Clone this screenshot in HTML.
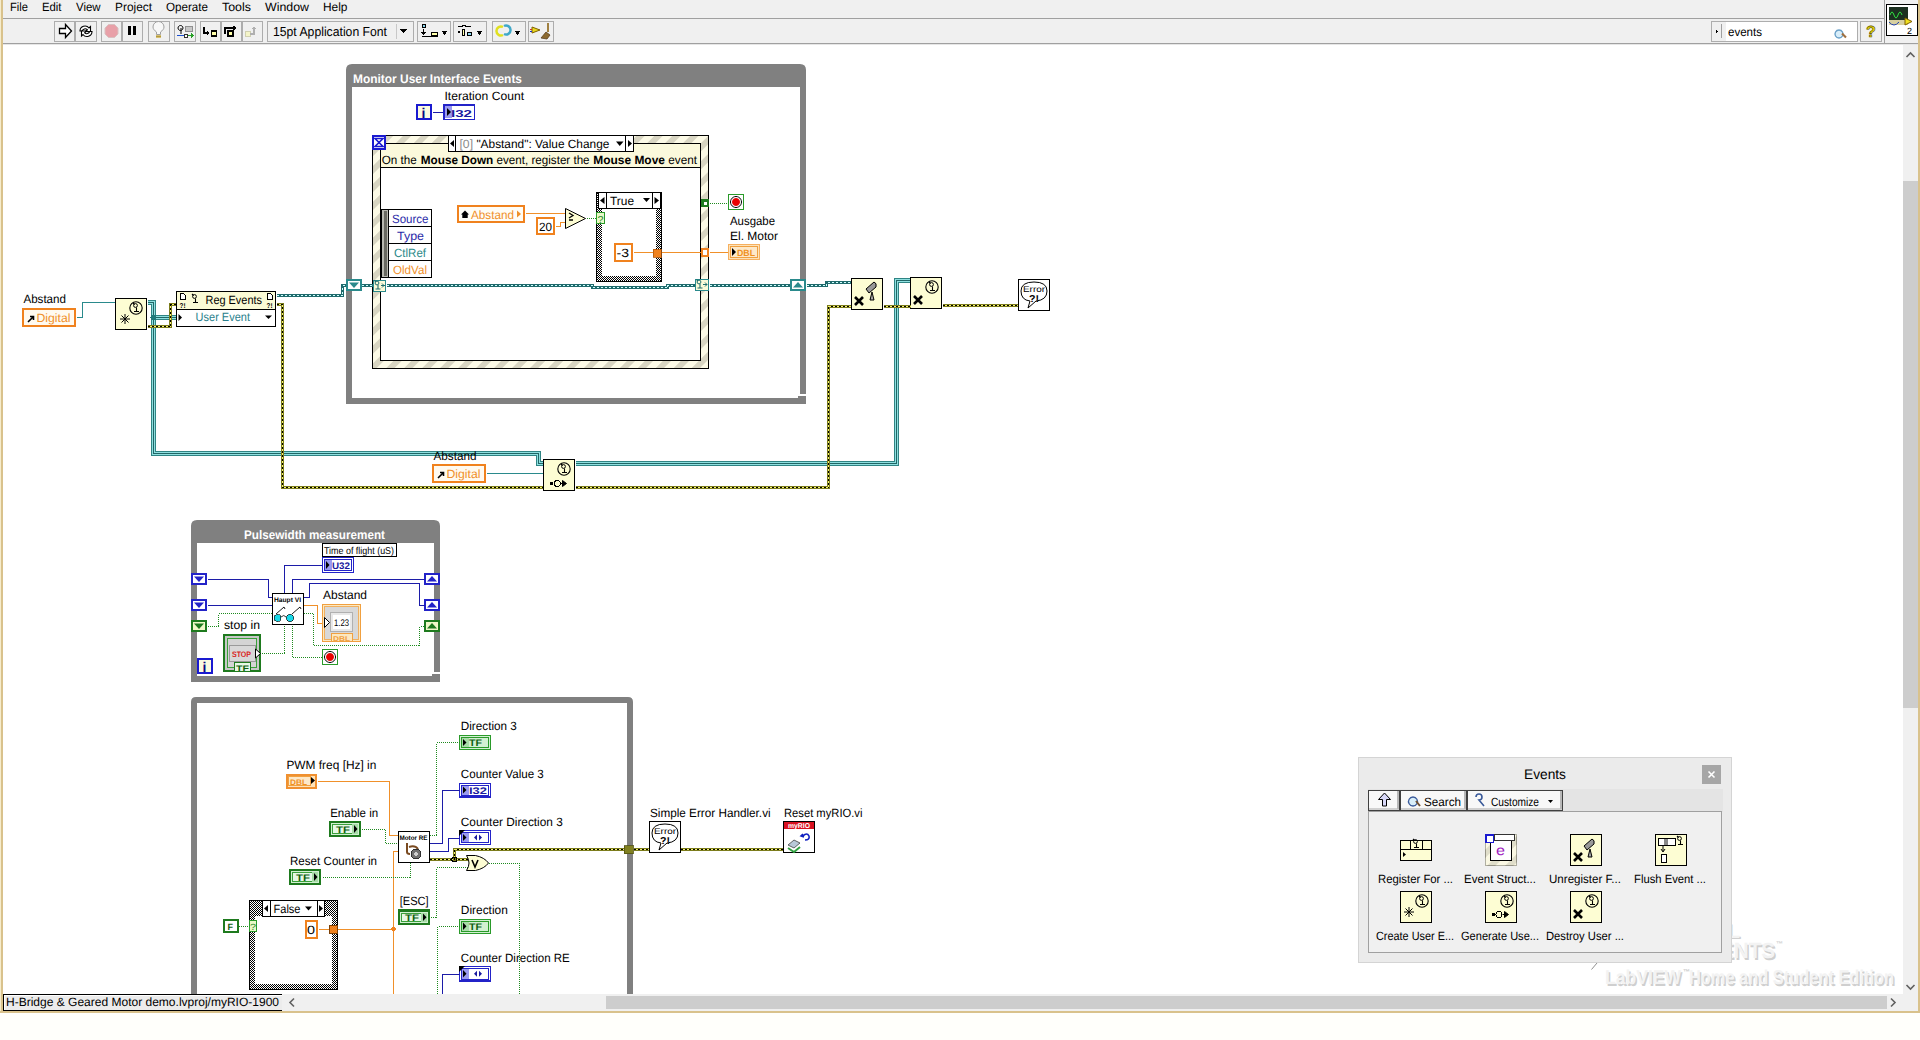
<!DOCTYPE html>
<html><head><meta charset="utf-8"><style>
html,body{margin:0;padding:0;background:#fff;overflow:hidden;width:1920px;height:1040px}
svg{position:absolute;left:0;top:0;display:block}
</style></head><body>
<svg width="1920" height="1040" viewBox="0 0 1920 1040" shape-rendering="crispEdges" text-rendering="geometricPrecision">
<rect x="0" y="0" width="1920" height="1040" fill="#ffffff" stroke="none" stroke-width="1" />
<rect x="0" y="0" width="1920" height="43" fill="#f0f0f0" stroke="none" stroke-width="1" />
<rect x="0" y="18" width="1884" height="1" fill="#a0a0a0" stroke="none" stroke-width="1" />
<rect x="0" y="43" width="1920" height="1" fill="#a0a0a0" stroke="none" stroke-width="1" />
<rect x="0" y="44" width="1920" height="1" fill="#e6e6e6" stroke="none" stroke-width="1" />
<rect x="0" y="0" width="1" height="1013" fill="#f6eccc" stroke="none" stroke-width="1" />
<rect x="1" y="0" width="2" height="1013" fill="#d9c28c" stroke="none" stroke-width="1" />
<rect x="1918" y="0" width="2" height="1013" fill="#d9c28c" stroke="none" stroke-width="1" />
<rect x="0" y="1011" width="1920" height="2" fill="#d9c28c" stroke="none" stroke-width="1" />
<rect x="0" y="1013" width="1920" height="27" fill="#fffffb" stroke="none" stroke-width="1" />
<text x="10" y="11" font-family='"Liberation Sans", sans-serif' font-size="12" fill="#000" font-weight="normal" text-anchor="start" textLength="18" lengthAdjust="spacingAndGlyphs" >File</text>
<text x="42" y="11" font-family='"Liberation Sans", sans-serif' font-size="12" fill="#000" font-weight="normal" text-anchor="start" textLength="19.5" lengthAdjust="spacingAndGlyphs" >Edit</text>
<text x="76" y="11" font-family='"Liberation Sans", sans-serif' font-size="12" fill="#000" font-weight="normal" text-anchor="start" textLength="24.599999999999994" lengthAdjust="spacingAndGlyphs" >View</text>
<text x="115" y="11" font-family='"Liberation Sans", sans-serif' font-size="12" fill="#000" font-weight="normal" text-anchor="start" textLength="37" lengthAdjust="spacingAndGlyphs" >Project</text>
<text x="166" y="11" font-family='"Liberation Sans", sans-serif' font-size="12" fill="#000" font-weight="normal" text-anchor="start" textLength="42" lengthAdjust="spacingAndGlyphs" >Operate</text>
<text x="222" y="11" font-family='"Liberation Sans", sans-serif' font-size="12" fill="#000" font-weight="normal" text-anchor="start" textLength="29" lengthAdjust="spacingAndGlyphs" >Tools</text>
<text x="265" y="11" font-family='"Liberation Sans", sans-serif' font-size="12" fill="#000" font-weight="normal" text-anchor="start" textLength="44" lengthAdjust="spacingAndGlyphs" >Window</text>
<text x="323" y="11" font-family='"Liberation Sans", sans-serif' font-size="12" fill="#000" font-weight="normal" text-anchor="start" textLength="24.5" lengthAdjust="spacingAndGlyphs" >Help</text>
<rect x="54.5" y="21.5" width="20" height="20" fill="#f0f0f0" stroke="#adadad" stroke-width="1" />
<rect x="75.5" y="21.5" width="21" height="20" fill="#f0f0f0" stroke="#adadad" stroke-width="1" />
<rect x="101.5" y="21.5" width="20" height="20" fill="#f0f0f0" stroke="#adadad" stroke-width="1" />
<rect x="122.5" y="21.5" width="20" height="20" fill="#f0f0f0" stroke="#adadad" stroke-width="1" />
<rect x="148.5" y="21.5" width="21" height="20" fill="#f0f0f0" stroke="#adadad" stroke-width="1" />
<rect x="174.5" y="21.5" width="21" height="20" fill="#f0f0f0" stroke="#adadad" stroke-width="1" />
<rect x="200.5" y="21.5" width="20" height="20" fill="#f0f0f0" stroke="#adadad" stroke-width="1" />
<rect x="221.5" y="21.5" width="20" height="20" fill="#f0f0f0" stroke="#adadad" stroke-width="1" />
<rect x="242.5" y="21.5" width="20" height="20" fill="#f0f0f0" stroke="#adadad" stroke-width="1" />
<rect x="417.5" y="21.5" width="33" height="20" fill="#f0f0f0" stroke="#adadad" stroke-width="1" />
<rect x="453.5" y="21.5" width="33" height="20" fill="#f0f0f0" stroke="#adadad" stroke-width="1" />
<rect x="492.5" y="21.5" width="33" height="20" fill="#f0f0f0" stroke="#adadad" stroke-width="1" />
<rect x="528.5" y="21.5" width="25" height="20" fill="#f0f0f0" stroke="#adadad" stroke-width="1" />
<path d="M59.5,28.5 h6 v-4 l6,6.5 l-6,6.5 v-4 h-6 z" fill="#fff" stroke="#000" stroke-width="1.3" shape-rendering="geometricPrecision"/>
<path d="M80,31 a5,5 0 0 1 9,-3 l1.5,-1.5 v5 h-5 l1.8,-1.8 a3,3 0 0 0 -5,1.3 z" fill="#fff" stroke="#000" stroke-width="1.1" shape-rendering="geometricPrecision"/>
<path d="M92,31.5 a5,5 0 0 1 -9,3 l-1.5,1.5 v-5 h5 l-1.8,1.8 a3,3 0 0 0 5,-1.3 z" fill="#fff" stroke="#000" stroke-width="1.1" shape-rendering="geometricPrecision"/>
<path d="M108.5,24.5 h6 l3.5,3.5 v6 l-3.5,3.5 h-6 l-3.5,-3.5 v-6 z" fill="#e8a0a8" stroke="#d8c0c0" stroke-width="1" shape-rendering="geometricPrecision"/>
<rect x="127.5" y="26" width="3" height="9" fill="#000" stroke="none" stroke-width="1" />
<rect x="133" y="26" width="3" height="9" fill="#000" stroke="none" stroke-width="1" />
<path d="M156.5,34.5 v-2.5 c-2,-1.5 -3.5,-3 -3.5,-5 a5.5,5.5 0 0 1 11,0 c0,2 -1.5,3.5 -3.5,5 v2.5 z" fill="#f8f8f8" stroke="#a0a0a0" stroke-width="1" shape-rendering="geometricPrecision"/>
<rect x="156" y="34.5" width="5" height="3.5" fill="#d8c070" stroke="none" stroke-width="1" />
<rect x="156" y="36" width="5" height="1" fill="#b09840" stroke="none" stroke-width="1" />
<path d="M180.5,25.5 a2.5,2.5 0 1 0 0.01,0 M181,28 v6" fill="none" stroke="#000" stroke-width="1" shape-rendering="geometricPrecision"/>
<rect x="185" y="26" width="7" height="5" fill="#c8c8c8" stroke="#909090" stroke-width="1" />
<rect x="177" y="35" width="8" height="1" fill="#1b4fd0" stroke="none" stroke-width="1" />
<rect x="184" y="34" width="3" height="3" fill="#fff" stroke="#000" stroke-width="0.8" />
<rect x="188" y="35" width="4" height="1" fill="#28a028" stroke="none" stroke-width="1" />
<path d="M191,33 l3,2.5 l-3,2.5 z" fill="#28a028" stroke="none" stroke-width="1" />
<path d="M203.5,27 v6 h5" fill="none" stroke="#000" stroke-width="2" />
<path d="M207,31 l3,2 l-3,2 z" fill="#000" stroke="none" stroke-width="1" />
<rect x="211.5" y="31" width="5" height="5" fill="#ffffa8" stroke="#000" stroke-width="1.2" />
<path d="M225,34 v-6 h9" fill="none" stroke="#000" stroke-width="2" />
<path d="M233,25.5 l4,2.5 l-4,2.5 z" fill="#000" stroke="none" stroke-width="1" />
<rect x="228" y="31" width="5" height="5" fill="#ffffa8" stroke="#000" stroke-width="1.2" />
<rect x="245" y="31" width="5" height="5" fill="#f4f4c8" stroke="#d0d0b0" stroke-width="1" />
<path d="M250,34 h4 v-6" fill="none" stroke="#b0b0b0" stroke-width="1.8" />
<path d="M251.5,29 l2.5,-3 l2.5,3 z" fill="#b0b0b0" stroke="none" stroke-width="1" />
<rect x="267.5" y="21.5" width="146" height="20" fill="#f0f0f0" stroke="#adadad" stroke-width="1" />
<rect x="396" y="24" width="1" height="15" fill="#c8c8c8" stroke="none" stroke-width="1" />
<path d="M400,29 h7 l-3.5,4 z" fill="#000" stroke="none" stroke-width="1" />
<text x="273" y="35.5" font-family='"Liberation Sans", sans-serif' font-size="13" fill="#000" font-weight="normal" text-anchor="start" textLength="114" lengthAdjust="spacingAndGlyphs" >15pt Application Font</text>
<path d="M441.5,31 h6 l-3,4 z" fill="#000" stroke="none" stroke-width="1" />
<path d="M476.5,31 h6 l-3,4 z" fill="#000" stroke="none" stroke-width="1" />
<path d="M514.5,31 h6 l-3,4 z" fill="#000" stroke="none" stroke-width="1" />
<rect x="422.5" y="24.5" width="3" height="3" fill="#8fd8f0" stroke="#000" stroke-width="1" />
<rect x="423" y="29" width="1" height="5" fill="#000" stroke="none" stroke-width="1" />
<path d="M421,32 l2.5,3 l2.5,-3 z" fill="#000" stroke="none" stroke-width="1" />
<rect x="431" y="32.5" width="6" height="3" fill="#ffffa8" stroke="#000" stroke-width="1" />
<rect x="422" y="36" width="16" height="1" fill="#000" stroke="none" stroke-width="0" stroke-dasharray="1,1"/>
<path d="M457.5,26 h5 l1.5,-1 l1.5,1 h5" fill="none" stroke="#000" stroke-width="1" />
<rect x="458" y="31" width="2" height="2" fill="#000" stroke="none" stroke-width="1" />
<rect x="462.5" y="29.5" width="2" height="6" fill="#ffffa8" stroke="#000" stroke-width="1" />
<rect x="467" y="32" width="4" height="3" fill="#8fd8f0" stroke="#000" stroke-width="1" />
<path d="M503,27 a4.5,4.5 0 1 0 0,8" fill="none" stroke="#e0e020" stroke-width="2.5" shape-rendering="geometricPrecision"/>
<path d="M504,26 a4.5,4.5 0 1 1 0,8" fill="none" stroke="#40a8c8" stroke-width="2.5" shape-rendering="geometricPrecision"/>
<path d="M532,27 l8,3 l-8,3 z" fill="#e8d820" stroke="#806000" stroke-width="1" shape-rendering="geometricPrecision"/>
<rect x="530" y="29" width="2" height="1" fill="#d03030" stroke="none" stroke-width="1" />
<rect x="530" y="31" width="2" height="1" fill="#2030c0" stroke="none" stroke-width="1" />
<path d="M541,38 l5,-6 l4,3 l-3,4 z" fill="#8c6a30" stroke="#5a4020" stroke-width="0.8" shape-rendering="geometricPrecision"/>
<rect x="547" y="23" width="2" height="9" fill="#a08040" stroke="none" stroke-width="1" />
<rect x="1711.5" y="21.5" width="146" height="20" fill="#ffffff" stroke="#adadad" stroke-width="1" />
<rect x="1712" y="22" width="14" height="19" fill="#f0f0f0" stroke="none" stroke-width="1" />
<path d="M1716,30 l2,1.5 l-2,1.5 z" fill="#000" stroke="none" stroke-width="1" />
<rect x="1721" y="24" width="1" height="14" fill="#a0a0a0" stroke="none" stroke-width="1" />
<text x="1728" y="36" font-family='"Liberation Sans", sans-serif' font-size="12" fill="#000" font-weight="normal" text-anchor="start" textLength="34" lengthAdjust="spacingAndGlyphs" >events</text>
<path d="M1839,30 a4,4 0 1 0 0.01,0" fill="#d8eefa" stroke="#6aa0c8" stroke-width="1.4" shape-rendering="geometricPrecision"/>
<path d="M1842,33.5 l4,4" fill="none" stroke="#a07040" stroke-width="2.2" shape-rendering="geometricPrecision"/>
<rect x="1860.5" y="21.5" width="21" height="20" fill="#f0f0f0" stroke="#adadad" stroke-width="1" />
<text x="1866" y="37" font-family='"Liberation Sans", sans-serif' font-size="16" fill="#e8d800" font-weight="bold" text-anchor="start" stroke="#5a5000" stroke-width="0.6">?</text>
<rect x="1884" y="0" width="1" height="43" fill="#a0a0a0" stroke="none" stroke-width="1" />
<rect x="1886.5" y="4.5" width="31" height="31" fill="#ffffff" stroke="#000" stroke-width="1" />
<rect x="1889" y="7" width="19" height="13" fill="#1c3020" stroke="none" stroke-width="1" />
<path d="M1890,15 q2,-6 4,0 q2,6 4,0 q2,-6 4,0" fill="none" stroke="#30e040" stroke-width="1" shape-rendering="geometricPrecision"/>
<rect x="1889" y="20" width="19" height="5" fill="#d8d0a0" stroke="none" stroke-width="1" />
<path d="M1889,22 q5,6 10,0" fill="none" stroke="#2040b0" stroke-width="1" shape-rendering="geometricPrecision"/>
<path d="M1905,18 l7,3.5 l-7,3.5 z" fill="#f0e020" stroke="#806000" stroke-width="1" shape-rendering="geometricPrecision"/>
<text x="1907" y="34" font-family='"Liberation Sans", sans-serif' font-size="9" fill="#000" font-weight="normal" text-anchor="start" >2</text>
<defs>
<pattern id="stripe" patternUnits="userSpaceOnUse" width="12.7" height="12.7" patternTransform="rotate(45)">
<rect width="12.7" height="12.7" fill="#fcfae6"/><rect width="5.8" height="12.7" fill="#d8d5c2"/></pattern>
<pattern id="checker" patternUnits="userSpaceOnUse" width="2" height="2">
<rect width="2" height="2" fill="#fff"/><rect width="1" height="1" fill="#000"/><rect x="1" y="1" width="1" height="1" fill="#000"/></pattern>
</defs>
<path d="M346,404 V70 Q346,64 352,64 H800 Q806,64 806,70 V394 H800 V87 H352 V398 H806 V404 Z" fill="#808080" stroke="none" stroke-width="0" shape-rendering="geometricPrecision"/>
<text x="353" y="82.5" font-family='"Liberation Sans", sans-serif' font-size="12.5" fill="#ffffff" font-weight="bold" text-anchor="start" textLength="169" lengthAdjust="spacingAndGlyphs" >Monitor User Interface Events</text>
<rect x="798" y="396" width="8" height="2" fill="#808080" stroke="none" stroke-width="1" />
<rect x="417.0" y="105.0" width="14" height="14" fill="#fbfbe0" stroke="#1a1ad0" stroke-width="2" />
<text x="421.5" y="117.5" font-family='"Liberation Sans", sans-serif' font-size="14" fill="#0a0a80" font-weight="bold" text-anchor="start" >i</text>
<polyline points="432.5,112.5 443.5,112.5" fill="none" stroke="#1c1ca8" stroke-width="1" stroke-linejoin="miter" stroke-linecap="butt" />
<rect x="443.75" y="104.75" width="30.5" height="14.5" fill="#ffffff" stroke="#2323c8" stroke-width="1.5" />
<rect x="445" y="106" width="7" height="12" fill="#9a9af0" stroke="none" stroke-width="1" />
<path d="M447,108 l4,4 l-4,4 z" fill="#000" stroke="none" stroke-width="0" shape-rendering="geometricPrecision"/>
<text x="451" y="116.5" font-family='"Liberation Sans", sans-serif' font-size="10" fill="#1a1aa0" font-weight="bold" text-anchor="start" textLength="21" lengthAdjust="spacingAndGlyphs" >I32</text>
<text x="444.5" y="100" font-family='"Liberation Sans", sans-serif' font-size="12" fill="#000" font-weight="normal" text-anchor="start" textLength="79.5" lengthAdjust="spacingAndGlyphs" >Iteration Count</text>
<rect x="372" y="135" width="337" height="234" fill="url(#stripe)"/>
<rect x="372.5" y="135.5" width="336" height="233" fill="none" stroke="#000" stroke-width="1" />
<rect x="380.5" y="143.5" width="320" height="217" fill="#ffffff" stroke="#000" stroke-width="1" />
<rect x="381" y="144" width="319" height="23" fill="#fbf9dc" stroke="none" stroke-width="1" />
<rect x="381" y="167" width="320" height="1" fill="#000" stroke="none" stroke-width="1" />
<text x="381.8" y="164" font-family='"Liberation Sans", sans-serif' font-size="12" fill="#000" font-weight="normal" text-anchor="start" textLength="35" lengthAdjust="spacingAndGlyphs" >On the</text>
<text x="420.8" y="164" font-family='"Liberation Sans", sans-serif' font-size="12" fill="#000" font-weight="bold" text-anchor="start" textLength="72.4" lengthAdjust="spacingAndGlyphs" >Mouse Down</text>
<text x="496.6" y="164" font-family='"Liberation Sans", sans-serif' font-size="12" fill="#000" font-weight="normal" text-anchor="start" textLength="93" lengthAdjust="spacingAndGlyphs" >event, register the</text>
<text x="593.2" y="164" font-family='"Liberation Sans", sans-serif' font-size="12" fill="#000" font-weight="bold" text-anchor="start" textLength="71.8" lengthAdjust="spacingAndGlyphs" >Mouse Move</text>
<text x="668.3" y="164" font-family='"Liberation Sans", sans-serif' font-size="12" fill="#000" font-weight="normal" text-anchor="start" textLength="28.7" lengthAdjust="spacingAndGlyphs" >event</text>
<rect x="373.0" y="136.0" width="12" height="13" fill="#ffffff" stroke="#1a1ad0" stroke-width="2" />
<path d="M375,138.5 h8 l-4,4 l4,4 h-8 l4,-4 z" fill="#ffffff" stroke="#1a1ad0" stroke-width="1.6" shape-rendering="geometricPrecision"/>
<rect x="448.5" y="135.5" width="185" height="16" fill="#ffffff" stroke="#000" stroke-width="1" />
<rect x="455" y="135" width="1" height="17" fill="#000" stroke="none" stroke-width="1" />
<rect x="625" y="135" width="1" height="17" fill="#000" stroke="none" stroke-width="1" />
<path d="M450,143.5 l4,-3.5 v7 z" fill="#000" stroke="none" stroke-width="0" shape-rendering="geometricPrecision"/>
<path d="M632,143.5 l-4,-3.5 v7 z" fill="#000" stroke="none" stroke-width="0" shape-rendering="geometricPrecision"/>
<text x="459.5" y="147.5" font-family='"Liberation Sans", sans-serif' font-size="12" fill="#8a8a8a" font-weight="normal" text-anchor="start" textLength="13.5" lengthAdjust="spacingAndGlyphs" >[0]</text>
<text x="476.4" y="147.5" font-family='"Liberation Sans", sans-serif' font-size="12" fill="#000" font-weight="normal" text-anchor="start" textLength="133" lengthAdjust="spacingAndGlyphs" >&quot;Abstand&quot;: Value Change</text>
<path d="M616,141.5 h7.5 l-3.75,4.5 z" fill="#000" stroke="none" stroke-width="0" shape-rendering="geometricPrecision"/>
<rect x="381.5" y="209.5" width="50" height="68" fill="#ffffff" stroke="#000" stroke-width="1" />
<rect x="382" y="210" width="6" height="67" fill="#b8b8b0" stroke="none" stroke-width="1" />
<rect x="383.5" y="211" width="3" height="65" fill="#6a6a62" stroke="none" stroke-width="1" />
<rect x="388" y="210" width="1" height="67" fill="#000" stroke="none" stroke-width="1" />
<rect x="388" y="226" width="44" height="1" fill="#000" stroke="none" stroke-width="1" />
<rect x="388" y="243" width="44" height="1" fill="#000" stroke="none" stroke-width="1" />
<rect x="388" y="260" width="44" height="1" fill="#000" stroke="none" stroke-width="1" />
<text x="392" y="222.5" font-family='"Liberation Sans", sans-serif' font-size="12" fill="#2a2aa8" font-weight="normal" text-anchor="start" textLength="36.5" lengthAdjust="spacingAndGlyphs" >Source</text>
<text x="397" y="239.5" font-family='"Liberation Sans", sans-serif' font-size="12" fill="#2a2aa8" font-weight="normal" text-anchor="start" textLength="27" lengthAdjust="spacingAndGlyphs" >Type</text>
<text x="394" y="256.5" font-family='"Liberation Sans", sans-serif' font-size="12" fill="#2b8a8a" font-weight="normal" text-anchor="start" textLength="32" lengthAdjust="spacingAndGlyphs" >CtlRef</text>
<text x="393" y="273.5" font-family='"Liberation Sans", sans-serif' font-size="12" fill="#f0902a" font-weight="normal" text-anchor="start" textLength="34" lengthAdjust="spacingAndGlyphs" >OldVal</text>
<rect x="458.0" y="206.0" width="66" height="16" fill="#fffdf6" stroke="#f0821e" stroke-width="2" />
<path d="M461,214.5 l4,-4 l4,4 h-1.3 v3.5 h-5.4 v-3.5 z" fill="#000" stroke="none" stroke-width="0" shape-rendering="geometricPrecision"/>
<text x="471" y="219" font-family='"Liberation Sans", sans-serif' font-size="12" fill="#f0902a" font-weight="normal" text-anchor="start" textLength="43" lengthAdjust="spacingAndGlyphs" >Abstand</text>
<path d="M517,210.5 l4,3.5 l-4,3.5 z" fill="#f0902a" stroke="none" stroke-width="0" shape-rendering="geometricPrecision"/>
<rect x="537.0" y="218.0" width="17" height="16" fill="#ffffff" stroke="#f0821e" stroke-width="2" />
<text x="539" y="230.5" font-family='"Liberation Sans", sans-serif' font-size="12" fill="#000" font-weight="normal" text-anchor="start" textLength="13" lengthAdjust="spacingAndGlyphs" >20</text>
<polyline points="525.5,213.5 565.5,213.5" fill="none" stroke="#f0902a" stroke-width="1" stroke-linejoin="miter" stroke-linecap="butt" />
<polyline points="555.5,226.5 560.5,226.5 560.5,222.5 566.5,222.5" fill="none" stroke="#f0902a" stroke-width="1" stroke-linejoin="miter" stroke-linecap="butt" />
<path d="M565.5,208.5 L585.5,218.5 L565.5,228.5 Z" fill="#fdfdd3" stroke="#000" stroke-width="1" shape-rendering="geometricPrecision"/>
<path d="M569,213 l4,2.5 l-4,2.5 M569,220 h4" fill="none" stroke="#000" stroke-width="1.3" shape-rendering="geometricPrecision"/>
<polyline points="586.5,218.5 596.5,218.5" fill="none" stroke="#1e8a1e" stroke-width="1" stroke-dasharray="1,1" stroke-linejoin="miter" stroke-linecap="butt" />
<rect x="596" y="192" width="66" height="90" fill="url(#checker)"/>
<rect x="596.5" y="192.5" width="65" height="89" fill="none" stroke="#000" stroke-width="1" />
<rect x="602" y="208" width="54" height="68" fill="#ffffff" stroke="none" stroke-width="1" />
<rect x="598.5" y="192.5" width="62" height="16" fill="#ffffff" stroke="#000" stroke-width="1" />
<rect x="606" y="192" width="1" height="17" fill="#000" stroke="none" stroke-width="1" />
<rect x="652" y="192" width="1" height="17" fill="#000" stroke="none" stroke-width="1" />
<path d="M600,200.5 l4.5,-3.5 v7 z" fill="#000" stroke="none" stroke-width="0" shape-rendering="geometricPrecision"/>
<path d="M659,200.5 l-4.5,-3.5 v7 z" fill="#000" stroke="none" stroke-width="0" shape-rendering="geometricPrecision"/>
<text x="610" y="205" font-family='"Liberation Sans", sans-serif' font-size="12" fill="#000" font-weight="normal" text-anchor="start" textLength="24" lengthAdjust="spacingAndGlyphs" >True</text>
<path d="M643,198 h7 l-3.5,4 z" fill="#000" stroke="none" stroke-width="0" shape-rendering="geometricPrecision"/>
<rect x="596.6" y="212.6" width="7.8" height="10.8" fill="#e8f8c8" stroke="#2a9a2a" stroke-width="1.2" />
<text x="597.5" y="222.5" font-family='"Liberation Sans", sans-serif' font-size="10" fill="#2a8a2a" font-weight="normal" text-anchor="start" textLength="6" lengthAdjust="spacingAndGlyphs" >?</text>
<rect x="615.0" y="244.0" width="17" height="17" fill="#ffffff" stroke="#f0821e" stroke-width="2" />
<text x="616.5" y="257" font-family='"Liberation Sans", sans-serif' font-size="12" fill="#000" font-weight="normal" text-anchor="start" textLength="12.5" lengthAdjust="spacingAndGlyphs" >-3</text>
<polyline points="633.5,252.5 653.5,252.5" fill="none" stroke="#f0902a" stroke-width="1" stroke-linejoin="miter" stroke-linecap="butt" />
<rect x="653" y="249" width="8" height="8" fill="#f0821e" stroke="#b05a10" stroke-width="0.8" />
<polyline points="661.5,252.5 701.5,252.5" fill="none" stroke="#f0902a" stroke-width="1" stroke-linejoin="miter" stroke-linecap="butt" />
<rect x="702.1" y="249.1" width="5.8" height="6.8" fill="#ffffff" stroke="#f0821e" stroke-width="2.2" />
<polyline points="709.5,252.5 728.5,252.5" fill="none" stroke="#f0902a" stroke-width="1" stroke-linejoin="miter" stroke-linecap="butt" />
<rect x="728.6" y="244.6" width="30.8" height="14.8" fill="#fde2b8" stroke="#f6b060" stroke-width="1.2" />
<rect x="730.5" y="246.5" width="27" height="11" fill="#fde8c8" stroke="#f0a040" stroke-width="1" />
<path d="M732,248 l4,4 l-4,4 z" fill="#000" stroke="none" stroke-width="0" shape-rendering="geometricPrecision"/>
<text x="737" y="256" font-family='"Liberation Sans", sans-serif' font-size="9" fill="#f09020" font-weight="bold" text-anchor="start" textLength="18" lengthAdjust="spacingAndGlyphs" >DBL</text>
<text x="730" y="224.5" font-family='"Liberation Sans", sans-serif' font-size="12" fill="#000" font-weight="normal" text-anchor="start" textLength="45" lengthAdjust="spacingAndGlyphs" >Ausgabe</text>
<text x="730" y="239.5" font-family='"Liberation Sans", sans-serif' font-size="12" fill="#000" font-weight="normal" text-anchor="start" textLength="48" lengthAdjust="spacingAndGlyphs" >El. Motor</text>
<rect x="701" y="199" width="8" height="8" fill="#1e7a1e" stroke="none" stroke-width="0" />
<rect x="703.5" y="201.5" width="3" height="3" fill="#ffffff" stroke="none" stroke-width="1" />
<polyline points="709.5,203.5 728.5,203.5" fill="none" stroke="#1e8a1e" stroke-width="1" stroke-dasharray="1,1" stroke-linejoin="miter" stroke-linecap="butt" />
<rect x="728.6" y="194.6" width="14.8" height="14.8" fill="#ffffff" stroke="#2a9a2a" stroke-width="1.2" />
<path d="M736,196.5 a5.5,5.5 0 1 0 0.01,0" fill="#ffffff" stroke="#000" stroke-width="1" shape-rendering="geometricPrecision"/>
<path d="M736,198 a4,4 0 1 0 0.01,0" fill="#e80000" stroke="none" stroke-width="0" shape-rendering="geometricPrecision"/>
<polyline points="276.5,295.5 342.5,295.5 342.5,285.5 346.5,285.5" fill="none" stroke="#1f6a6c" stroke-width="3" stroke-linejoin="miter" stroke-linecap="butt" />
<polyline points="276.5,295.5 342.5,295.5 342.5,285.5 346.5,285.5" fill="none" stroke="#d0ffff" stroke-width="1" stroke-dasharray="2,2" stroke-linejoin="miter" stroke-linecap="butt" />
<polyline points="361.5,285.5 373.5,285.5" fill="none" stroke="#1f6a6c" stroke-width="3" stroke-linejoin="miter" stroke-linecap="butt" />
<polyline points="361.5,285.5 373.5,285.5" fill="none" stroke="#d0ffff" stroke-width="1" stroke-dasharray="2,2" stroke-linejoin="miter" stroke-linecap="butt" />
<polyline points="386.5,285.5 592.5,285.5 592.5,287.5 667.5,287.5 667.5,285.5 695.5,285.5" fill="none" stroke="#1f6a6c" stroke-width="3" stroke-linejoin="miter" stroke-linecap="butt" />
<polyline points="386.5,285.5 592.5,285.5 592.5,287.5 667.5,287.5 667.5,285.5 695.5,285.5" fill="none" stroke="#d0ffff" stroke-width="1" stroke-dasharray="2,2" stroke-linejoin="miter" stroke-linecap="butt" />
<polyline points="709.5,285.5 790.5,285.5" fill="none" stroke="#1f6a6c" stroke-width="3" stroke-linejoin="miter" stroke-linecap="butt" />
<polyline points="709.5,285.5 790.5,285.5" fill="none" stroke="#d0ffff" stroke-width="1" stroke-dasharray="2,2" stroke-linejoin="miter" stroke-linecap="butt" />
<polyline points="806.5,285.5 826.5,285.5 826.5,282.5 851.5,282.5" fill="none" stroke="#1f6a6c" stroke-width="3" stroke-linejoin="miter" stroke-linecap="butt" />
<polyline points="806.5,285.5 826.5,285.5 826.5,282.5 851.5,282.5" fill="none" stroke="#d0ffff" stroke-width="1" stroke-dasharray="2,2" stroke-linejoin="miter" stroke-linecap="butt" />
<rect x="347.2" y="280.2" width="13.6" height="9.6" fill="#ffffff" stroke="#2a8a8c" stroke-width="2.4" />
<path d="M349.0,282.5 L354.0,288.0 L359.0,282.5 Z" fill="#2a8a8c" stroke="none" stroke-width="0" shape-rendering="geometricPrecision"/>
<rect x="791.2" y="280.2" width="13.6" height="9.6" fill="#ffffff" stroke="#2a8a8c" stroke-width="2.4" />
<path d="M793.0,287.5 L798.0,282.0 L803.0,287.5 Z" fill="#2a8a8c" stroke="none" stroke-width="0" shape-rendering="geometricPrecision"/>
<rect x="373.6" y="280.6" width="11.8" height="10.8" fill="#fbfbd8" stroke="#2a8a8c" stroke-width="1.2" />
<circle cx="377.0" cy="283.0" r="1.9" fill="none" stroke="#1f6e6e" stroke-width="1" shape-rendering="geometricPrecision"/>
<path d="M374.5,280.5 l1.5,1.5 M378.0,285.0 v3.5 M375.5,289.0 h5" fill="none" stroke="#1f6e6e" stroke-width="1.1" shape-rendering="geometricPrecision"/>
<path d="M381,285.5 h4 M382,283.5 l2,2 l-2,2" fill="none" stroke="#1f6e6e" stroke-width="1" shape-rendering="geometricPrecision"/>
<rect x="695.6" y="279.6" width="12.8" height="10.8" fill="#fbfbd8" stroke="#2a8a8c" stroke-width="1.2" />
<circle cx="699.0" cy="282.0" r="1.9" fill="none" stroke="#1f6e6e" stroke-width="1" shape-rendering="geometricPrecision"/>
<path d="M696.5,279.5 l1.5,1.5 M700.0,284.0 v3.5 M697.5,288.0 h5" fill="none" stroke="#1f6e6e" stroke-width="1.1" shape-rendering="geometricPrecision"/>
<path d="M703,284.5 h4 M705,282.5 l2,2 l-2,2" fill="none" stroke="#1f6e6e" stroke-width="1" shape-rendering="geometricPrecision"/>
<text x="23.4" y="303.3" font-family='"Liberation Sans", sans-serif' font-size="12" fill="#000" font-weight="normal" text-anchor="start" textLength="42.6" lengthAdjust="spacingAndGlyphs" >Abstand</text>
<rect x="23.1" y="309.1" width="51.8" height="16.8" fill="#fffaf0" stroke="#f0821e" stroke-width="2.2" />
<path d="M28,322 l5,-5 M30,316.5 h3.5 v3.5" fill="none" stroke="#000" stroke-width="1.6" shape-rendering="geometricPrecision"/>
<text x="36.5" y="322" font-family='"Liberation Sans", sans-serif' font-size="12" fill="#f0902a" font-weight="normal" text-anchor="start" textLength="34" lengthAdjust="spacingAndGlyphs" >Digital</text>
<polyline points="76.5,317.5 82.5,317.5 82.5,302.5 115.5,302.5" fill="none" stroke="#2a8a8c" stroke-width="1" stroke-linejoin="miter" stroke-linecap="butt" />
<rect x="115.5" y="298.5" width="31" height="31" fill="#fdfdd3" stroke="#000" stroke-width="1" />
<circle cx="136" cy="308" r="6.2" fill="none" stroke="#000" stroke-width="1.1" shape-rendering="geometricPrecision"/>
<circle cx="135.5" cy="305.5" r="1.9" fill="none" stroke="#000" stroke-width="1" shape-rendering="geometricPrecision"/>
<path d="M133,303 l1.5,1.5 M136.5,307.5 v3.5 M134,311.5 h5" fill="none" stroke="#000" stroke-width="1.1" shape-rendering="geometricPrecision"/>
<path d="M120,319 h10 M125,314 v10 M121.5,315.5 l7,7 M128.5,315.5 l-7,7" fill="none" stroke="#000" stroke-width="1" shape-rendering="geometricPrecision"/>
<polyline points="147.5,302.5 153.5,302.5 153.5,453.5 538.5,453.5 538.5,463.5 543.5,463.5" fill="none" stroke="#2f8484" stroke-width="5" stroke-linejoin="miter" stroke-linecap="butt" />
<polyline points="147.5,302.5 153.5,302.5 153.5,453.5 538.5,453.5 538.5,463.5 543.5,463.5" fill="none" stroke="#8ee0e0" stroke-width="3" stroke-linejoin="miter" stroke-linecap="butt" />
<polyline points="147.5,302.5 153.5,302.5 153.5,453.5 538.5,453.5 538.5,463.5 543.5,463.5" fill="none" stroke="#216666" stroke-width="1" stroke-linejoin="miter" stroke-linecap="butt" />
<polyline points="153.5,317.5 176.5,317.5" fill="none" stroke="#2f8484" stroke-width="5" stroke-linejoin="miter" stroke-linecap="butt" />
<polyline points="153.5,317.5 176.5,317.5" fill="none" stroke="#8ee0e0" stroke-width="3" stroke-linejoin="miter" stroke-linecap="butt" />
<polyline points="153.5,317.5 176.5,317.5" fill="none" stroke="#216666" stroke-width="1" stroke-linejoin="miter" stroke-linecap="butt" />
<circle cx="153.5" cy="317.5" r="3" fill="#1f7a7a"/>
<polyline points="147.5,326.5 170.5,326.5 170.5,304.5 176.5,304.5" fill="none" stroke="#7c7c1c" stroke-width="3" stroke-linejoin="miter" stroke-linecap="butt" />
<polyline points="147.5,326.5 170.5,326.5 170.5,304.5 176.5,304.5" fill="none" stroke="#f6f470" stroke-width="1" stroke-linejoin="miter" stroke-linecap="butt" />
<polyline points="147.5,326.5 170.5,326.5 170.5,304.5 176.5,304.5" fill="none" stroke="#000" stroke-width="1" stroke-dasharray="2,2" stroke-linejoin="miter" stroke-linecap="butt" />
<rect x="176.5" y="291.5" width="99" height="35" fill="#ffffff" stroke="#000" stroke-width="1" />
<rect x="177" y="292" width="98" height="17" fill="#fbfbd6" stroke="none" stroke-width="1" />
<rect x="176" y="309" width="100" height="1" fill="#000" stroke="none" stroke-width="1" />
<text x="205.5" y="303.7" font-family='"Liberation Sans", sans-serif' font-size="12" fill="#000" font-weight="normal" text-anchor="start" textLength="56.5" lengthAdjust="spacingAndGlyphs" >Reg Events</text>
<path d="M180.5,293.5 h3 l2,2 v3.5 h-5 z M267.5,293.5 h3 l2,2 v3.5 h-5 z" fill="#ffffff" stroke="#000" stroke-width="1" />
<text x="179.5" y="307.5" font-family='"Liberation Sans", sans-serif' font-size="7" fill="#000" font-weight="bold" text-anchor="start" textLength="6" lengthAdjust="spacingAndGlyphs" >?!</text>
<text x="266.5" y="307.5" font-family='"Liberation Sans", sans-serif' font-size="7" fill="#000" font-weight="bold" text-anchor="start" textLength="6" lengthAdjust="spacingAndGlyphs" >?!</text>
<circle cx="194.5" cy="296.5" r="1.9" fill="none" stroke="#000" stroke-width="1" shape-rendering="geometricPrecision"/>
<path d="M192,294 l1.5,1.5 M195.5,298.5 v3.5 M193,302.5 h5" fill="none" stroke="#000" stroke-width="1.1" shape-rendering="geometricPrecision"/>
<path d="M178.5,314 l3.5,3.5 l-3.5,3.5 z" fill="#000" stroke="none" stroke-width="0" shape-rendering="geometricPrecision"/>
<text x="195.6" y="321.3" font-family='"Liberation Sans", sans-serif' font-size="12" fill="#2a7f8c" font-weight="normal" text-anchor="start" textLength="54.4" lengthAdjust="spacingAndGlyphs" >User Event</text>
<path d="M265,315.6 h7 l-3.5,3.5 z" fill="#000" stroke="none" stroke-width="0" shape-rendering="geometricPrecision"/>
<polyline points="276.5,304.5 282.5,304.5 282.5,487.5 543.5,487.5" fill="none" stroke="#7c7c1c" stroke-width="3" stroke-linejoin="miter" stroke-linecap="butt" />
<polyline points="276.5,304.5 282.5,304.5 282.5,487.5 543.5,487.5" fill="none" stroke="#f6f470" stroke-width="1" stroke-linejoin="miter" stroke-linecap="butt" />
<polyline points="276.5,304.5 282.5,304.5 282.5,487.5 543.5,487.5" fill="none" stroke="#000" stroke-width="1" stroke-dasharray="2,2" stroke-linejoin="miter" stroke-linecap="butt" />
<text x="433.5" y="460" font-family='"Liberation Sans", sans-serif' font-size="12" fill="#000" font-weight="normal" text-anchor="start" textLength="43" lengthAdjust="spacingAndGlyphs" >Abstand</text>
<rect x="433.1" y="465.1" width="51.8" height="16.8" fill="#fffaf0" stroke="#f0821e" stroke-width="2.2" />
<path d="M438,478 l5,-5 M440,472.5 h3.5 v3.5" fill="none" stroke="#000" stroke-width="1.6" shape-rendering="geometricPrecision"/>
<text x="446.5" y="478" font-family='"Liberation Sans", sans-serif' font-size="12" fill="#f0902a" font-weight="normal" text-anchor="start" textLength="34" lengthAdjust="spacingAndGlyphs" >Digital</text>
<polyline points="486.5,473.5 543.5,473.5" fill="none" stroke="#2a8a8c" stroke-width="1" stroke-linejoin="miter" stroke-linecap="butt" />
<rect x="543.5" y="459.5" width="31" height="31" fill="#fdfdd3" stroke="#000" stroke-width="1" />
<circle cx="564" cy="469" r="6.2" fill="none" stroke="#000" stroke-width="1.1" shape-rendering="geometricPrecision"/>
<circle cx="563.5" cy="466.5" r="1.9" fill="none" stroke="#000" stroke-width="1" shape-rendering="geometricPrecision"/>
<path d="M561,464 l1.5,1.5 M564.5,468.5 v3.5 M562,472.5 h5" fill="none" stroke="#000" stroke-width="1.1" shape-rendering="geometricPrecision"/>
<rect x="550" y="482" width="3" height="3" fill="#000" stroke="none" stroke-width="1" />
<circle cx="557.3" cy="483.5" r="3" fill="none" stroke="#000" stroke-width="1"/>
<path d="M560.5,483.5 h2.5 M562.5,480.5 l4,3 l-4,3 z" fill="#000" stroke="#000" stroke-width="1" shape-rendering="geometricPrecision"/>
<polyline points="575.5,463.5 896.5,463.5 896.5,280.5 910.5,280.5" fill="none" stroke="#2f8484" stroke-width="5" stroke-linejoin="miter" stroke-linecap="butt" />
<polyline points="575.5,463.5 896.5,463.5 896.5,280.5 910.5,280.5" fill="none" stroke="#8ee0e0" stroke-width="3" stroke-linejoin="miter" stroke-linecap="butt" />
<polyline points="575.5,463.5 896.5,463.5 896.5,280.5 910.5,280.5" fill="none" stroke="#216666" stroke-width="1" stroke-linejoin="miter" stroke-linecap="butt" />
<polyline points="575.5,487.5 828.5,487.5 828.5,306.5 851.5,306.5" fill="none" stroke="#7c7c1c" stroke-width="3" stroke-linejoin="miter" stroke-linecap="butt" />
<polyline points="575.5,487.5 828.5,487.5 828.5,306.5 851.5,306.5" fill="none" stroke="#f6f470" stroke-width="1" stroke-linejoin="miter" stroke-linecap="butt" />
<polyline points="575.5,487.5 828.5,487.5 828.5,306.5 851.5,306.5" fill="none" stroke="#000" stroke-width="1" stroke-dasharray="2,2" stroke-linejoin="miter" stroke-linecap="butt" />
<rect x="851.5" y="278.5" width="31" height="31" fill="#fdfdd3" stroke="#000" stroke-width="1" />
<path d="M855,297 l8,8 M863,297 l-8,8" fill="none" stroke="#000" stroke-width="2.6" shape-rendering="geometricPrecision"/>
<path d="M866,289 l8,-7 q3,1 2,5 l-7,6 z" fill="#999" stroke="#000" stroke-width="1" shape-rendering="geometricPrecision"/>
<path d="M872,292 l2,8 h-4 z" fill="#aaa" stroke="#000" stroke-width="1" shape-rendering="geometricPrecision"/>
<rect x="910.5" y="277.5" width="31" height="31" fill="#fdfdd3" stroke="#000" stroke-width="1" />
<path d="M914,296 l8,8 M922,296 l-8,8" fill="none" stroke="#000" stroke-width="2.6" shape-rendering="geometricPrecision"/>
<circle cx="932" cy="287" r="6.2" fill="none" stroke="#000" stroke-width="1.1" shape-rendering="geometricPrecision"/>
<circle cx="931.5" cy="284.5" r="1.9" fill="none" stroke="#000" stroke-width="1" shape-rendering="geometricPrecision"/>
<path d="M929,282 l1.5,1.5 M932.5,286.5 v3.5 M930,290.5 h5" fill="none" stroke="#000" stroke-width="1.1" shape-rendering="geometricPrecision"/>
<polyline points="883.5,306.5 910.5,306.5" fill="none" stroke="#7c7c1c" stroke-width="3" stroke-linejoin="miter" stroke-linecap="butt" />
<polyline points="883.5,306.5 910.5,306.5" fill="none" stroke="#f6f470" stroke-width="1" stroke-linejoin="miter" stroke-linecap="butt" />
<polyline points="883.5,306.5 910.5,306.5" fill="none" stroke="#000" stroke-width="1" stroke-dasharray="2,2" stroke-linejoin="miter" stroke-linecap="butt" />
<polyline points="942.5,305.5 1018.5,305.5" fill="none" stroke="#7c7c1c" stroke-width="3" stroke-linejoin="miter" stroke-linecap="butt" />
<polyline points="942.5,305.5 1018.5,305.5" fill="none" stroke="#f6f470" stroke-width="1" stroke-linejoin="miter" stroke-linecap="butt" />
<polyline points="942.5,305.5 1018.5,305.5" fill="none" stroke="#000" stroke-width="1" stroke-dasharray="2,2" stroke-linejoin="miter" stroke-linecap="butt" />
<rect x="1018.5" y="279.5" width="31" height="31" fill="#ffffff" stroke="#000" stroke-width="1" />
<path d="M1021,291 q0,-9 13,-9 q13,0 13,9 q0,9 -11,10 l-8,7 l2,-7 q-9,-1 -9,-10 z" fill="#fff" stroke="#000" stroke-width="1" shape-rendering="geometricPrecision"/>
<text x="1023" y="292" font-family='"Liberation Sans", sans-serif' font-size="8.5" fill="#000" font-weight="normal" text-anchor="start" textLength="22" lengthAdjust="spacingAndGlyphs" >Error</text>
<text x="1029" y="301.5" font-family='"Liberation Sans", sans-serif' font-size="10" fill="#000" font-weight="bold" text-anchor="start" textLength="10" lengthAdjust="spacingAndGlyphs" >?!</text>
<path d="M191,682 V526 Q191,520 197,520 H434 Q440,520 440,526 V672 H434 V543 H197 V676 H440 V682 Z" fill="#808080" stroke="none" stroke-width="0" shape-rendering="geometricPrecision"/>
<text x="244" y="538.5" font-family='"Liberation Sans", sans-serif' font-size="12.5" fill="#ffffff" font-weight="bold" text-anchor="start" textLength="141" lengthAdjust="spacingAndGlyphs" >Pulsewidth measurement</text>
<rect x="432" y="674" width="8" height="2" fill="#808080" stroke="none" stroke-width="1" />
<rect x="192.2" y="574.2" width="13.6" height="9.6" fill="#ffffff" stroke="#2323c8" stroke-width="2.4" />
<path d="M194.0,576.5 L199.0,582.0 L204.0,576.5 Z" fill="#2323c8" stroke="none" stroke-width="0" shape-rendering="geometricPrecision"/>
<rect x="425.2" y="574.2" width="13.6" height="9.6" fill="#ffffff" stroke="#2323c8" stroke-width="2.4" />
<path d="M427.0,581.5 L432.0,576.0 L437.0,581.5 Z" fill="#2323c8" stroke="none" stroke-width="0" shape-rendering="geometricPrecision"/>
<rect x="192.2" y="600.2" width="13.6" height="9.6" fill="#ffffff" stroke="#2323c8" stroke-width="2.4" />
<path d="M194.0,602.5 L199.0,608.0 L204.0,602.5 Z" fill="#2323c8" stroke="none" stroke-width="0" shape-rendering="geometricPrecision"/>
<rect x="425.2" y="600.2" width="13.6" height="9.6" fill="#ffffff" stroke="#2323c8" stroke-width="2.4" />
<path d="M427.0,607.5 L432.0,602.0 L437.0,607.5 Z" fill="#2323c8" stroke="none" stroke-width="0" shape-rendering="geometricPrecision"/>
<rect x="192.2" y="621.2" width="13.6" height="9.6" fill="#f0f8c8" stroke="#1e7a1e" stroke-width="2.4" />
<path d="M194.0,623.5 L199.0,629.0 L204.0,623.5 Z" fill="#1e7a1e" stroke="none" stroke-width="0" shape-rendering="geometricPrecision"/>
<rect x="425.2" y="621.2" width="13.6" height="9.6" fill="#f0f8c8" stroke="#1e7a1e" stroke-width="2.4" />
<path d="M427.0,628.5 L432.0,623.0 L437.0,628.5 Z" fill="#1e7a1e" stroke="none" stroke-width="0" shape-rendering="geometricPrecision"/>
<polyline points="207.5,579.5 268.5,579.5 268.5,597.5 272.5,597.5" fill="none" stroke="#1c1ca8" stroke-width="1" stroke-linejoin="miter" stroke-linecap="butt" />
<polyline points="207.5,605.5 272.5,605.5" fill="none" stroke="#1c1ca8" stroke-width="1" stroke-linejoin="miter" stroke-linecap="butt" />
<polyline points="207.5,626.5 218.5,626.5 218.5,613.5 272.5,613.5" fill="none" stroke="#1e8a1e" stroke-width="1" stroke-dasharray="1,1" stroke-linejoin="miter" stroke-linecap="butt" />
<polyline points="284.5,593.5 284.5,565.5 322.5,565.5" fill="none" stroke="#1c1ca8" stroke-width="1" stroke-linejoin="miter" stroke-linecap="butt" />
<polyline points="292.5,593.5 292.5,579.5 424.5,579.5" fill="none" stroke="#1c1ca8" stroke-width="1" stroke-linejoin="miter" stroke-linecap="butt" />
<polyline points="303.5,597.5 309.5,597.5 309.5,583.5 419.5,583.5 419.5,605.5 424.5,605.5" fill="none" stroke="#1c1ca8" stroke-width="1" stroke-linejoin="miter" stroke-linecap="butt" />
<polyline points="303.5,605.5 317.5,605.5 317.5,623.5 323.5,623.5" fill="none" stroke="#f0902a" stroke-width="1" stroke-linejoin="miter" stroke-linecap="butt" />
<polyline points="303.5,613.5 313.5,613.5 313.5,645.5 419.5,645.5 419.5,626.5 424.5,626.5" fill="none" stroke="#1e8a1e" stroke-width="1" stroke-dasharray="1,1" stroke-linejoin="miter" stroke-linecap="butt" />
<polyline points="284.5,625.5 284.5,653.5 261.5,653.5" fill="none" stroke="#1e8a1e" stroke-width="1" stroke-dasharray="1,1" stroke-linejoin="miter" stroke-linecap="butt" />
<polyline points="292.5,625.5 292.5,657.5 322.5,657.5" fill="none" stroke="#1e8a1e" stroke-width="1" stroke-dasharray="1,1" stroke-linejoin="miter" stroke-linecap="butt" />
<rect x="272.5" y="593.5" width="31" height="31" fill="#ffffff" stroke="#000" stroke-width="1" />
<text x="274" y="601.5" font-family='"Liberation Sans", sans-serif' font-size="6.5" fill="#000" font-weight="bold" text-anchor="start" textLength="27" lengthAdjust="spacingAndGlyphs" >Haupt VI</text>
<path d="M276,614 l8,-7 l1,2 M292,614 l8,-7 l1,2" fill="none" stroke="#000" stroke-width="0.9" shape-rendering="geometricPrecision"/>
<circle cx="277.5" cy="618" r="3.6" fill="#18d8e8" stroke="#000" stroke-width="0.6"/>
<circle cx="290" cy="618" r="3.6" fill="#18d8e8" stroke="#000" stroke-width="0.6"/>
<path d="M281,617 q3,-3 5,0" fill="none" stroke="#000" stroke-width="0.8" shape-rendering="geometricPrecision"/>
<rect x="322.5" y="543.5" width="74" height="13" fill="#ffffff" stroke="#000" stroke-width="1" />
<text x="324" y="553.5" font-family='"Liberation Sans", sans-serif' font-size="10" fill="#000" font-weight="normal" text-anchor="start" textLength="70" lengthAdjust="spacingAndGlyphs" >Time of flight (uS)</text>
<rect x="322.65" y="557.65" width="30.7" height="14.7" fill="#ffffff" stroke="#2323c8" stroke-width="1.3" />
<rect x="324.5" y="559.5" width="27" height="11" fill="#ffffff" stroke="#2323c8" stroke-width="1" />
<rect x="325" y="560" width="7" height="10" fill="#9a9af0" stroke="none" stroke-width="1" />
<path d="M326,561 l3.5,4.0 l-3.5,4.0 z" fill="#000" stroke="none" stroke-width="0" shape-rendering="geometricPrecision"/>
<text x="332" y="569" font-family='"Liberation Sans", sans-serif' font-size="9.5" fill="#1a1aa0" font-weight="bold" text-anchor="start" textLength="18" lengthAdjust="spacingAndGlyphs" >U32</text>
<text x="323" y="599" font-family='"Liberation Sans", sans-serif' font-size="12" fill="#000" font-weight="normal" text-anchor="start" textLength="44" lengthAdjust="spacingAndGlyphs" >Abstand</text>
<rect x="322.65" y="604.65" width="37.7" height="36.7" fill="#fce8c0" stroke="#f0a040" stroke-width="1.3" />
<rect x="324.5" y="606.5" width="34" height="33" fill="#d8d8d8" stroke="#f0b060" stroke-width="1" />
<rect x="330.5" y="612.5" width="22" height="19" fill="#e8e8e8" stroke="#b0b0b0" stroke-width="1" />
<rect x="333" y="615" width="17" height="14" fill="#ffffff" stroke="none" stroke-width="1" />
<text x="334" y="626" font-family='"Liberation Sans", sans-serif' font-size="9.5" fill="#000" font-weight="normal" text-anchor="start" textLength="15" lengthAdjust="spacingAndGlyphs" >1.23</text>
<path d="M324.5,617.5 l5,5 l-5,5 z" fill="#fff" stroke="#000" stroke-width="1" shape-rendering="geometricPrecision"/>
<rect x="331.5" y="633.5" width="21" height="8" fill="#fce8c0" stroke="#f0a040" stroke-width="1" />
<text x="333" y="640.5" font-family='"Liberation Sans", sans-serif' font-size="7" fill="#f0a040" font-weight="bold" text-anchor="start" textLength="17" lengthAdjust="spacingAndGlyphs" >DBL</text>
<text x="224" y="629.3" font-family='"Liberation Sans", sans-serif' font-size="12" fill="#000" font-weight="normal" text-anchor="start" textLength="36" lengthAdjust="spacingAndGlyphs" >stop in</text>
<rect x="224.2" y="635.2" width="35.6" height="35.6" fill="#c8c8c8" stroke="#1e7a1e" stroke-width="2.4" />
<rect x="227.5" y="638.5" width="29" height="29" fill="#d4d4d4" stroke="#3aa03a" stroke-width="1" />
<rect x="229.0" y="645.5" width="26.5" height="16" fill="#d8d8d8" stroke="#9a9a9a" stroke-width="1" />
<text x="232" y="657" font-family='"Liberation Sans", sans-serif' font-size="8" fill="#d82020" font-weight="bold" text-anchor="start" textLength="19" lengthAdjust="spacingAndGlyphs" >STOP</text>
<path d="M255.5,649 l5,4.5 l-5,4.5 z" fill="#fff" stroke="#000" stroke-width="1" shape-rendering="geometricPrecision"/>
<rect x="234.5" y="662.5" width="16" height="9" fill="#e6f8e6" stroke="#1e7a1e" stroke-width="1" />
<text x="236" y="670.5" font-family='"Liberation Sans", sans-serif' font-size="8" fill="#106010" font-weight="bold" text-anchor="start" textLength="13" lengthAdjust="spacingAndGlyphs" >TF</text>
<rect x="198.0" y="659.0" width="14" height="14" fill="#fbfbe0" stroke="#1a1ad0" stroke-width="2" />
<text x="202.5" y="671.5" font-family='"Liberation Sans", sans-serif' font-size="14" fill="#0a0a80" font-weight="bold" text-anchor="start" >i</text>
<rect x="322.6" y="649.6" width="14.8" height="14.8" fill="#ffffff" stroke="#2a9a2a" stroke-width="1.2" />
<path d="M330,651.5 a5.5,5.5 0 1 0 0.01,0" fill="#ffffff" stroke="#000" stroke-width="1" shape-rendering="geometricPrecision"/>
<path d="M330,653 a4,4 0 1 0 0.01,0" fill="#e80000" stroke="none" stroke-width="0" shape-rendering="geometricPrecision"/>
<path d="M191,994 V702 Q191,697 196,697 H628 Q633,697 633,702 V994 H627 V703 H197 V994 Z" fill="#808080" stroke="none" stroke-width="0" shape-rendering="geometricPrecision"/>
<text x="460.8" y="729.7" font-family='"Liberation Sans", sans-serif' font-size="12" fill="#000" font-weight="normal" text-anchor="start" textLength="56" lengthAdjust="spacingAndGlyphs" >Direction 3</text>
<rect x="459.65" y="735.65" width="30.7" height="13.7" fill="#d2f0d2" stroke="#2a9a2a" stroke-width="1.3" />
<rect x="461.5" y="737.5" width="27" height="10" fill="#d2f0d2" stroke="#2a9a2a" stroke-width="1" />
<rect x="462" y="738" width="7" height="9" fill="#a8dca8" stroke="none" stroke-width="1" />
<path d="M463,739 l3.5,3.5 l-3.5,3.5 z" fill="#000" stroke="none" stroke-width="0" shape-rendering="geometricPrecision"/>
<text x="469" y="746" font-family='"Liberation Sans", sans-serif' font-size="9.5" fill="#106010" font-weight="bold" text-anchor="start" textLength="13" lengthAdjust="spacingAndGlyphs" >TF</text>
<text x="460.8" y="778" font-family='"Liberation Sans", sans-serif' font-size="12" fill="#000" font-weight="normal" text-anchor="start" textLength="83" lengthAdjust="spacingAndGlyphs" >Counter Value 3</text>
<rect x="459.65" y="783.15" width="30.7" height="13.7" fill="#ffffff" stroke="#2323c8" stroke-width="1.3" />
<rect x="461.5" y="785.0" width="27" height="10.0" fill="#ffffff" stroke="#2323c8" stroke-width="1" />
<rect x="462" y="785.5" width="7" height="9.0" fill="#9a9af0" stroke="none" stroke-width="1" />
<path d="M463,786.5 l3.5,3.5 l-3.5,3.5 z" fill="#000" stroke="none" stroke-width="0" shape-rendering="geometricPrecision"/>
<text x="469" y="793.5" font-family='"Liberation Sans", sans-serif' font-size="9.5" fill="#1a1aa0" font-weight="bold" text-anchor="start" textLength="18" lengthAdjust="spacingAndGlyphs" >I32</text>
<text x="460.8" y="826" font-family='"Liberation Sans", sans-serif' font-size="12" fill="#000" font-weight="normal" text-anchor="start" textLength="102" lengthAdjust="spacingAndGlyphs" >Counter Direction 3</text>
<rect x="459.65" y="830.65" width="30.7" height="13.7" fill="#ffffff" stroke="#2323c8" stroke-width="1.3" />
<rect x="461.5" y="832.5" width="27" height="10" fill="#ffffff" stroke="#2323c8" stroke-width="1" />
<rect x="462" y="833" width="7" height="9" fill="#9a9af0" stroke="none" stroke-width="1" />
<path d="M463,834 l3.5,3.5 l-3.5,3.5 z" fill="#000" stroke="none" stroke-width="0" shape-rendering="geometricPrecision"/>
<path d="M474,837.5 l3,-3 v6 z M482,837.5 l-3,-3 v6 z" fill="#1a1aa0" stroke="none" stroke-width="0" shape-rendering="geometricPrecision"/>
<path d="M459,830 h6 l-6,6 z" fill="#000" stroke="none" stroke-width="0" shape-rendering="geometricPrecision"/>
<text x="286.4" y="769" font-family='"Liberation Sans", sans-serif' font-size="12" fill="#000" font-weight="normal" text-anchor="start" textLength="90" lengthAdjust="spacingAndGlyphs" >PWM freq [Hz] in</text>
<rect x="286.5" y="774.5" width="29.5" height="13.0" fill="#fde2b8" stroke="#f09030" stroke-width="2" />
<rect x="288.5" y="776.5" width="22" height="9" fill="#fde8c8" stroke="#f0a040" stroke-width="1" />
<text x="290" y="785" font-family='"Liberation Sans", sans-serif' font-size="8" fill="#f09020" font-weight="bold" text-anchor="start" textLength="17" lengthAdjust="spacingAndGlyphs" >DBL</text>
<path d="M311,777 l4,3.5 l-4,3.5 z" fill="#000" stroke="none" stroke-width="0" shape-rendering="geometricPrecision"/>
<text x="330.2" y="816.7" font-family='"Liberation Sans", sans-serif' font-size="12" fill="#000" font-weight="normal" text-anchor="start" textLength="48" lengthAdjust="spacingAndGlyphs" >Enable in</text>
<rect x="330.1" y="822.1" width="29.8" height="13.8" fill="#d2f0d2" stroke="#1e7a1e" stroke-width="2.2" />
<rect x="332.5" y="824.5" width="25" height="9" fill="#e6f8e6" stroke="#3aa03a" stroke-width="1" />
<text x="336" y="833" font-family='"Liberation Sans", sans-serif' font-size="9.5" fill="#106010" font-weight="bold" text-anchor="start" textLength="14" lengthAdjust="spacingAndGlyphs" >TF</text>
<rect x="352" y="824" width="6" height="10" fill="#a8dca8" stroke="none" stroke-width="1" />
<path d="M354,825 l3.5,4.0 l-3.5,4.0 z" fill="#000" stroke="none" stroke-width="0" shape-rendering="geometricPrecision"/>
<text x="290" y="865" font-family='"Liberation Sans", sans-serif' font-size="12" fill="#000" font-weight="normal" text-anchor="start" textLength="87" lengthAdjust="spacingAndGlyphs" >Reset Counter in</text>
<rect x="290.1" y="870.1" width="29.8" height="13.8" fill="#d2f0d2" stroke="#1e7a1e" stroke-width="2.2" />
<rect x="292.5" y="872.5" width="25" height="9" fill="#e6f8e6" stroke="#3aa03a" stroke-width="1" />
<text x="296" y="881" font-family='"Liberation Sans", sans-serif' font-size="9.5" fill="#106010" font-weight="bold" text-anchor="start" textLength="14" lengthAdjust="spacingAndGlyphs" >TF</text>
<rect x="312" y="872" width="6" height="10" fill="#a8dca8" stroke="none" stroke-width="1" />
<path d="M314,873 l3.5,4.0 l-3.5,4.0 z" fill="#000" stroke="none" stroke-width="0" shape-rendering="geometricPrecision"/>
<text x="399.7" y="905.3" font-family='"Liberation Sans", sans-serif' font-size="12" fill="#000" font-weight="normal" text-anchor="start" textLength="29" lengthAdjust="spacingAndGlyphs" >[ESC]</text>
<rect x="399.1" y="910.6" width="29.8" height="13.3" fill="#d2f0d2" stroke="#1e7a1e" stroke-width="2.2" />
<rect x="401.5" y="913.0" width="25" height="8.5" fill="#e6f8e6" stroke="#3aa03a" stroke-width="1" />
<text x="405" y="921" font-family='"Liberation Sans", sans-serif' font-size="9.5" fill="#106010" font-weight="bold" text-anchor="start" textLength="14" lengthAdjust="spacingAndGlyphs" >TF</text>
<rect x="421" y="912.5" width="6" height="9.5" fill="#a8dca8" stroke="none" stroke-width="1" />
<path d="M423,913.5 l3.5,3.75 l-3.5,3.75 z" fill="#000" stroke="none" stroke-width="0" shape-rendering="geometricPrecision"/>
<text x="460.8" y="914.2" font-family='"Liberation Sans", sans-serif' font-size="12" fill="#000" font-weight="normal" text-anchor="start" textLength="47" lengthAdjust="spacingAndGlyphs" >Direction</text>
<rect x="459.65" y="919.15" width="30.7" height="14.2" fill="#d2f0d2" stroke="#2a9a2a" stroke-width="1.3" />
<rect x="461.5" y="921.0" width="27" height="10.5" fill="#d2f0d2" stroke="#2a9a2a" stroke-width="1" />
<rect x="462" y="921.5" width="7" height="9.5" fill="#a8dca8" stroke="none" stroke-width="1" />
<path d="M463,922.5 l3.5,3.75 l-3.5,3.75 z" fill="#000" stroke="none" stroke-width="0" shape-rendering="geometricPrecision"/>
<text x="469" y="930" font-family='"Liberation Sans", sans-serif' font-size="9.5" fill="#106010" font-weight="bold" text-anchor="start" textLength="13" lengthAdjust="spacingAndGlyphs" >TF</text>
<text x="460.8" y="962" font-family='"Liberation Sans", sans-serif' font-size="12" fill="#000" font-weight="normal" text-anchor="start" textLength="109" lengthAdjust="spacingAndGlyphs" >Counter Direction RE</text>
<rect x="459.65" y="966.65" width="30.7" height="14.2" fill="#ffffff" stroke="#2323c8" stroke-width="1.3" />
<rect x="461.5" y="968.5" width="27" height="10.5" fill="#ffffff" stroke="#2323c8" stroke-width="1" />
<rect x="462" y="969" width="7" height="9.5" fill="#9a9af0" stroke="none" stroke-width="1" />
<path d="M463,970 l3.5,3.75 l-3.5,3.75 z" fill="#000" stroke="none" stroke-width="0" shape-rendering="geometricPrecision"/>
<path d="M474,973.75 l3,-3 v6 z M482,973.75 l-3,-3 v6 z" fill="#1a1aa0" stroke="none" stroke-width="0" shape-rendering="geometricPrecision"/>
<path d="M459,966 h6 l-6,6 z" fill="#000" stroke="none" stroke-width="0" shape-rendering="geometricPrecision"/>
<polyline points="317.5,781.5 389.5,781.5 389.5,835.5 398.5,835.5" fill="none" stroke="#f0902a" stroke-width="1" stroke-linejoin="miter" stroke-linecap="butt" />
<polyline points="361.5,829.5 385.5,829.5 385.5,843.5 398.5,843.5" fill="none" stroke="#1e8a1e" stroke-width="1" stroke-dasharray="1,1" stroke-linejoin="miter" stroke-linecap="butt" />
<polyline points="398.5,851.5 393.5,851.5 393.5,994.5" fill="none" stroke="#f0902a" stroke-width="1" stroke-linejoin="miter" stroke-linecap="butt" />
<polyline points="410.5,862.5 410.5,877.5 321.5,877.5" fill="none" stroke="#1e8a1e" stroke-width="1" stroke-dasharray="1,1" stroke-linejoin="miter" stroke-linecap="butt" />
<polyline points="429.5,835.5 436.5,835.5 436.5,742.5 459.5,742.5" fill="none" stroke="#1e8a1e" stroke-width="1" stroke-dasharray="1,1" stroke-linejoin="miter" stroke-linecap="butt" />
<polyline points="429.5,843.5 442.5,843.5 442.5,790.5 459.5,790.5" fill="none" stroke="#1c1ca8" stroke-width="1" stroke-linejoin="miter" stroke-linecap="butt" />
<polyline points="429.5,851.5 448.5,851.5 448.5,838.5 459.5,838.5" fill="none" stroke="#1c1ca8" stroke-width="1" stroke-linejoin="miter" stroke-linecap="butt" />
<polyline points="429.5,859.5 468.5,859.5" fill="none" stroke="#7c7c1c" stroke-width="3" stroke-linejoin="miter" stroke-linecap="butt" />
<polyline points="429.5,859.5 468.5,859.5" fill="none" stroke="#f6f470" stroke-width="1" stroke-linejoin="miter" stroke-linecap="butt" />
<polyline points="429.5,859.5 468.5,859.5" fill="none" stroke="#000" stroke-width="1" stroke-dasharray="2,2" stroke-linejoin="miter" stroke-linecap="butt" />
<polyline points="454.5,859.5 454.5,849.5 624.5,849.5" fill="none" stroke="#7c7c1c" stroke-width="3" stroke-linejoin="miter" stroke-linecap="butt" />
<polyline points="454.5,859.5 454.5,849.5 624.5,849.5" fill="none" stroke="#f6f470" stroke-width="1" stroke-linejoin="miter" stroke-linecap="butt" />
<polyline points="454.5,859.5 454.5,849.5 624.5,849.5" fill="none" stroke="#000" stroke-width="1" stroke-dasharray="2,2" stroke-linejoin="miter" stroke-linecap="butt" />
<circle cx="454.3" cy="859.5" r="2.5" fill="none" stroke="#000" stroke-width="1"/>
<polyline points="488.5,863.5 519.5,863.5 519.5,994.5" fill="none" stroke="#1e8a1e" stroke-width="1" stroke-dasharray="1,1" stroke-linejoin="miter" stroke-linecap="butt" />
<polyline points="430.5,917.5 436.5,917.5 436.5,867.5 468.5,867.5" fill="none" stroke="#1e8a1e" stroke-width="1" stroke-dasharray="1,1" stroke-linejoin="miter" stroke-linecap="butt" />
<polyline points="459.5,926.5 437.5,926.5 437.5,994.5" fill="none" stroke="#1e8a1e" stroke-width="1" stroke-dasharray="1,1" stroke-linejoin="miter" stroke-linecap="butt" />
<polyline points="459.5,974.5 442.5,974.5 442.5,994.5" fill="none" stroke="#1c1ca8" stroke-width="1" stroke-linejoin="miter" stroke-linecap="butt" />
<polyline points="337.5,929.5 393.5,929.5" fill="none" stroke="#f0902a" stroke-width="1" stroke-linejoin="miter" stroke-linecap="butt" />
<circle cx="393.5" cy="929.3" r="2.3" fill="#f0821e"/>
<polyline points="238.5,926.5 249.5,926.5" fill="none" stroke="#1e8a1e" stroke-width="1" stroke-dasharray="1,1" stroke-linejoin="miter" stroke-linecap="butt" />
<rect x="398.5" y="831.5" width="31" height="31" fill="#ffffff" stroke="#000" stroke-width="1" />
<text x="399.5" y="839.5" font-family='"Liberation Sans", sans-serif' font-size="6.5" fill="#000" font-weight="bold" text-anchor="start" textLength="28" lengthAdjust="spacingAndGlyphs" >Motor RE</text>
<path d="M407,843 v9 q0,2 3,2" fill="none" stroke="#7a4a20" stroke-width="2" shape-rendering="geometricPrecision"/>
<path d="M409,847 q6,-2 9,2" fill="none" stroke="#7a4a20" stroke-width="2" shape-rendering="geometricPrecision"/>
<circle cx="416" cy="854" r="5" fill="#707070" stroke="#303030" stroke-width="1"/>
<circle cx="416" cy="854" r="1.8" fill="#d0d0d0"/>
<path d="M466.5,855.5 q5,7.5 0,15 h9 q9,-2 13,-7.5 q-4,-5.5 -13,-7.5 z" fill="#fdfdd3" stroke="#000" stroke-width="1" shape-rendering="geometricPrecision"/>
<path d="M472,860 l3,7 l3,-7" fill="none" stroke="#000" stroke-width="1.6" shape-rendering="geometricPrecision"/>
<rect x="249" y="900" width="89" height="90" fill="url(#checker)"/>
<rect x="249.5" y="900.5" width="88" height="89" fill="none" stroke="#000" stroke-width="1" />
<rect x="255" y="916" width="77" height="68" fill="#ffffff" stroke="none" stroke-width="1" />
<rect x="262.5" y="900.5" width="62" height="16" fill="#ffffff" stroke="#000" stroke-width="1" />
<rect x="269.5" y="900" width="1" height="17" fill="#000" stroke="none" stroke-width="1" />
<rect x="316.5" y="900" width="1" height="17" fill="#000" stroke="none" stroke-width="1" />
<path d="M264,908.5 l4,-3.5 v7 z" fill="#000" stroke="none" stroke-width="0" shape-rendering="geometricPrecision"/>
<path d="M323,908.5 l-4,-3.5 v7 z" fill="#000" stroke="none" stroke-width="0" shape-rendering="geometricPrecision"/>
<text x="273.5" y="913" font-family='"Liberation Sans", sans-serif' font-size="12" fill="#000" font-weight="normal" text-anchor="start" textLength="27" lengthAdjust="spacingAndGlyphs" >False</text>
<path d="M305,906.5 h7 l-3.5,4 z" fill="#000" stroke="none" stroke-width="0" shape-rendering="geometricPrecision"/>
<rect x="249.6" y="920.6" width="6.8" height="10.8" fill="#e8f8c8" stroke="#2a9a2a" stroke-width="1.2" />
<text x="250" y="930" font-family='"Liberation Sans", sans-serif' font-size="9" fill="#2a8a2a" font-weight="normal" text-anchor="start" textLength="6" lengthAdjust="spacingAndGlyphs" >?</text>
<rect x="224.0" y="920.0" width="14" height="12" fill="#ffffff" stroke="#1e7a1e" stroke-width="2" />
<text x="227.5" y="930" font-family='"Liberation Sans", sans-serif' font-size="9" fill="#106010" font-weight="bold" text-anchor="start" >F</text>
<rect x="306.0" y="921.0" width="11" height="16.5" fill="#ffffff" stroke="#f0821e" stroke-width="2" />
<text x="307" y="934" font-family='"Liberation Sans", sans-serif' font-size="12" fill="#000" font-weight="normal" text-anchor="start" textLength="8" lengthAdjust="spacingAndGlyphs" >0</text>
<polyline points="318.5,929.5 329.5,929.5" fill="none" stroke="#f0902a" stroke-width="1" stroke-linejoin="miter" stroke-linecap="butt" />
<rect x="329.2" y="925" width="8.4" height="8.6" fill="#f0821e" stroke="#603000" stroke-width="0.8" />
<rect x="624" y="845.5" width="9" height="8" fill="#808020" stroke="#505010" stroke-width="0.8" />
<polyline points="633.5,849.5 649.5,849.5" fill="none" stroke="#7c7c1c" stroke-width="3" stroke-linejoin="miter" stroke-linecap="butt" />
<polyline points="633.5,849.5 649.5,849.5" fill="none" stroke="#f6f470" stroke-width="1" stroke-linejoin="miter" stroke-linecap="butt" />
<polyline points="633.5,849.5 649.5,849.5" fill="none" stroke="#000" stroke-width="1" stroke-dasharray="2,2" stroke-linejoin="miter" stroke-linecap="butt" />
<polyline points="680.5,849.5 784.5,849.5" fill="none" stroke="#7c7c1c" stroke-width="3" stroke-linejoin="miter" stroke-linecap="butt" />
<polyline points="680.5,849.5 784.5,849.5" fill="none" stroke="#f6f470" stroke-width="1" stroke-linejoin="miter" stroke-linecap="butt" />
<polyline points="680.5,849.5 784.5,849.5" fill="none" stroke="#000" stroke-width="1" stroke-dasharray="2,2" stroke-linejoin="miter" stroke-linecap="butt" />
<text x="650" y="816.5" font-family='"Liberation Sans", sans-serif' font-size="12" fill="#000" font-weight="normal" text-anchor="start" textLength="120.6" lengthAdjust="spacingAndGlyphs" >Simple Error Handler.vi</text>
<rect x="649.5" y="821.5" width="31" height="31" fill="#ffffff" stroke="#000" stroke-width="1" />
<path d="M652,833 q0,-9 13,-9 q13,0 13,9 q0,9 -11,10 l-8,7 l2,-7 q-9,-1 -9,-10 z" fill="#fff" stroke="#000" stroke-width="1" shape-rendering="geometricPrecision"/>
<text x="654" y="834" font-family='"Liberation Sans", sans-serif' font-size="8.5" fill="#000" font-weight="normal" text-anchor="start" textLength="22" lengthAdjust="spacingAndGlyphs" >Error</text>
<text x="660" y="843.5" font-family='"Liberation Sans", sans-serif' font-size="10" fill="#000" font-weight="bold" text-anchor="start" textLength="10" lengthAdjust="spacingAndGlyphs" >?!</text>
<text x="784" y="816.5" font-family='"Liberation Sans", sans-serif' font-size="12" fill="#000" font-weight="normal" text-anchor="start" textLength="78.4" lengthAdjust="spacingAndGlyphs" >Reset myRIO.vi</text>
<rect x="783.5" y="821.5" width="31" height="31" fill="#ffffff" stroke="#000" stroke-width="1" />
<rect x="784" y="822" width="30" height="7" fill="#d81020" stroke="none" stroke-width="1" />
<text x="788" y="828" font-family='"Liberation Sans", sans-serif' font-size="7" fill="#ffffff" font-weight="bold" text-anchor="start" textLength="22" lengthAdjust="spacingAndGlyphs" >myRIO</text>
<path d="M788,845 l6,-5 l6,3 l-6,5 z" fill="#b8c8d8" stroke="#404040" stroke-width="0.8" shape-rendering="geometricPrecision"/>
<path d="M788,848 l6,4 l6,-5" fill="none" stroke="#30a040" stroke-width="2" shape-rendering="geometricPrecision"/>
<path d="M803,836 q4,-4 6,0 q1,4 -4,4 M803,834 l-2,2 l3,1" fill="none" stroke="#1020c0" stroke-width="1.6" shape-rendering="geometricPrecision"/>
<rect x="1903" y="45" width="15" height="949" fill="#f0f0f0" stroke="none" stroke-width="1" />
<rect x="1903" y="181" width="15" height="527" fill="#cdcdcd" stroke="none" stroke-width="1" />
<path d="M1906.5,57 l4,-4 l4,4" fill="none" stroke="#606060" stroke-width="1.6" shape-rendering="geometricPrecision"/>
<path d="M1906.5,985 l4,4 l4,-4" fill="none" stroke="#606060" stroke-width="1.6" shape-rendering="geometricPrecision"/>
<rect x="282" y="994" width="1621" height="17" fill="#f0f0f0" stroke="none" stroke-width="1" />
<rect x="606" y="996" width="1281" height="13" fill="#cdcdcd" stroke="none" stroke-width="1" />
<path d="M294,998.5 l-4,4 l4,4" fill="none" stroke="#606060" stroke-width="1.6" shape-rendering="geometricPrecision"/>
<path d="M1891,998.5 l4,4 l-4,4" fill="none" stroke="#606060" stroke-width="1.6" shape-rendering="geometricPrecision"/>
<rect x="1903" y="994" width="15" height="17" fill="#f0f0f0" stroke="none" stroke-width="1" />
<rect x="3" y="994" width="279" height="17" fill="#ececec" stroke="none" stroke-width="1" />
<rect x="3" y="994" width="279" height="1" fill="#000" stroke="none" stroke-width="1" />
<rect x="3" y="1010" width="279" height="1" fill="#000" stroke="none" stroke-width="1" />
<rect x="3" y="994" width="1" height="17" fill="#000" stroke="none" stroke-width="1" />
<rect x="4" y="995" width="278" height="1" fill="#ffffff" stroke="none" stroke-width="1" />
<rect x="4" y="995" width="1" height="15" fill="#ffffff" stroke="none" stroke-width="1" />
<text x="6" y="1006" font-family='"Liberation Sans", sans-serif' font-size="12" fill="#000" font-weight="normal" text-anchor="start" textLength="273" lengthAdjust="spacingAndGlyphs" >H-Bridge &amp; Geared Motor demo.lvproj/myRIO-1900</text>
<text x="1727.5" y="939.0" font-family='"Liberation Sans", sans-serif' font-size="21" fill="#cfcfcf" font-weight="bold" text-anchor="start" textLength="14" lengthAdjust="spacingAndGlyphs" >L</text>
<text x="1726" y="937.5" font-family='"Liberation Sans", sans-serif' font-size="21" fill="#f3f3f3" font-weight="bold" text-anchor="start" textLength="14" lengthAdjust="spacingAndGlyphs" >L</text>
<text x="1721.5" y="959.7" font-family='"Liberation Sans", sans-serif' font-size="22" fill="#cfcfcf" font-weight="bold" text-anchor="start" textLength="55" lengthAdjust="spacingAndGlyphs" >ENTS</text>
<text x="1720" y="958.2" font-family='"Liberation Sans", sans-serif' font-size="22" fill="#f3f3f3" font-weight="bold" text-anchor="start" textLength="55" lengthAdjust="spacingAndGlyphs" >ENTS</text>
<text x="1776" y="946" font-family='"Liberation Sans", sans-serif' font-size="7" fill="#d0d0d0" font-weight="bold" text-anchor="start" >™</text>
<text x="1606.5" y="985.7" font-family='"Liberation Sans", sans-serif' font-size="20" fill="#cfcfcf" font-weight="bold" text-anchor="start" textLength="76" lengthAdjust="spacingAndGlyphs" >LabVIEW</text>
<text x="1605" y="984.2" font-family='"Liberation Sans", sans-serif' font-size="20" fill="#f3f3f3" font-weight="bold" text-anchor="start" textLength="76" lengthAdjust="spacingAndGlyphs" >LabVIEW</text>
<text x="1683" y="974" font-family='"Liberation Sans", sans-serif' font-size="7" fill="#c8c8c8" font-weight="bold" text-anchor="start" >™</text>
<text x="1690.5" y="985.7" font-family='"Liberation Sans", sans-serif' font-size="20" fill="#cfcfcf" font-weight="bold" text-anchor="start" textLength="205" lengthAdjust="spacingAndGlyphs" >Home and Student Edition</text>
<text x="1689" y="984.2" font-family='"Liberation Sans", sans-serif' font-size="20" fill="#f3f3f3" font-weight="bold" text-anchor="start" textLength="205" lengthAdjust="spacingAndGlyphs" >Home and Student Edition</text>
<rect x="1358.5" y="757.5" width="373" height="205" fill="#ebebeb" stroke="#d4d4d4" stroke-width="1" />
<path d="M1597,963 L1591.5,969.5" fill="none" stroke="#909090" stroke-width="1" shape-rendering="geometricPrecision"/>
<text x="1545" y="778.6" font-family='"Liberation Sans", sans-serif' font-size="14" fill="#000" font-weight="normal" text-anchor="middle" textLength="42" lengthAdjust="spacingAndGlyphs" >Events</text>
<rect x="1702" y="765" width="19" height="19" fill="#a6a6a6" stroke="none" stroke-width="1" />
<path d="M1708.5,771.5 l6,6 M1714.5,771.5 l-6,6" fill="none" stroke="#ffffff" stroke-width="1.6" shape-rendering="geometricPrecision"/>
<rect x="1368" y="789" width="355" height="23" fill="#e4e4e4" stroke="none" stroke-width="1" />
<rect x="1368.5" y="811.5" width="353" height="141" fill="#f0f0f0" stroke="#a0a0a0" stroke-width="1" />
<rect x="1368.5" y="790.5" width="31" height="20" fill="#f8f8f8" stroke="#404040" stroke-width="1" />
<rect x="1369" y="808" width="30" height="2" fill="#d0d0d0" stroke="none" stroke-width="1" />
<rect x="1397" y="791" width="2" height="18" fill="#b8b8b8" stroke="none" stroke-width="1" />
<rect x="1400.5" y="790.5" width="66" height="20" fill="#f8f8f8" stroke="#404040" stroke-width="1" />
<rect x="1401" y="808" width="65" height="2" fill="#d0d0d0" stroke="none" stroke-width="1" />
<rect x="1464" y="791" width="2" height="18" fill="#b8b8b8" stroke="none" stroke-width="1" />
<rect x="1467.5" y="790.5" width="95" height="20" fill="#f8f8f8" stroke="#404040" stroke-width="1" />
<rect x="1468" y="808" width="94" height="2" fill="#d0d0d0" stroke="none" stroke-width="1" />
<rect x="1560" y="791" width="2" height="18" fill="#b8b8b8" stroke="none" stroke-width="1" />
<path d="M1384.5,793 l-6,6.5 h4 v6.5 h4 v-6.5 h4 z" fill="#d8d8f8" stroke="#000" stroke-width="1" shape-rendering="geometricPrecision"/>
<path d="M1413,797 a4.5,4.5 0 1 0 0.01,0" fill="#d8eefa" stroke="#3a5a9a" stroke-width="1.3" shape-rendering="geometricPrecision"/>
<path d="M1416,801 l4,5" fill="none" stroke="#705030" stroke-width="2" shape-rendering="geometricPrecision"/>
<text x="1424" y="806" font-family='"Liberation Sans", sans-serif' font-size="12" fill="#000" font-weight="normal" text-anchor="start" textLength="37" lengthAdjust="spacingAndGlyphs" >Search</text>
<path d="M1476,797 a3,3 0 1 1 3,3 l5,6" fill="none" stroke="#3a5a9a" stroke-width="1.6" shape-rendering="geometricPrecision"/>
<text x="1491" y="806" font-family='"Liberation Sans", sans-serif' font-size="12" fill="#000" font-weight="normal" text-anchor="start" textLength="48" lengthAdjust="spacingAndGlyphs" >Customize</text>
<path d="M1548,800 h5 l-2.5,3 z" fill="#000" stroke="none" stroke-width="0" shape-rendering="geometricPrecision"/>
<rect x="1400.5" y="840.5" width="31" height="20" fill="#fdfdd3" stroke="#000" stroke-width="1" />
<rect x="1400" y="849" width="32" height="1" fill="#000" stroke="none" stroke-width="1" />
<rect x="1410" y="840" width="1" height="9" fill="#000" stroke="none" stroke-width="1" />
<rect x="1422" y="840" width="1" height="9" fill="#000" stroke="none" stroke-width="1" />
<circle cx="1415.5" cy="841.5" r="1.9" fill="none" stroke="#000" stroke-width="1" shape-rendering="geometricPrecision"/>
<path d="M1413,839 l1.5,1.5 M1416.5,843.5 v3.5 M1414,847.5 h5" fill="none" stroke="#000" stroke-width="1.1" shape-rendering="geometricPrecision"/>
<path d="M1403,852 l3,2.5 l-3,2.5 z" fill="#000" stroke="none" stroke-width="0" shape-rendering="geometricPrecision"/>
<text x="1378" y="882.8" font-family='"Liberation Sans", sans-serif' font-size="12" fill="#000" font-weight="normal" text-anchor="start" textLength="75" lengthAdjust="spacingAndGlyphs" >Register For ...</text>
<rect x="1485.5" y="834.5" width="31" height="31" fill="#f4f2dc" stroke="#000" stroke-width="1" />
<rect x="1485" y="834" width="32" height="32" fill="url(#stripe)" opacity="0.7"/>
<rect x="1490.5" y="840.5" width="21" height="20" fill="#ffffff" stroke="#000" stroke-width="1" />
<rect x="1485.75" y="834.75" width="7.5" height="7.5" fill="#ffffff" stroke="#1a1ad0" stroke-width="1.5" />
<rect x="1494.4" y="834.4" width="20.2" height="6.2" fill="#ffffff" stroke="#000" stroke-width="0.8" />
<text x="1496" y="855" font-family='"Liberation Sans", sans-serif' font-size="14" fill="#a020c0" font-weight="normal" text-anchor="start" textLength="9" lengthAdjust="spacingAndGlyphs" >e</text>
<text x="1464" y="882.8" font-family='"Liberation Sans", sans-serif' font-size="12" fill="#000" font-weight="normal" text-anchor="start" textLength="72" lengthAdjust="spacingAndGlyphs" >Event Struct...</text>
<rect x="1570.5" y="834.5" width="31" height="31" fill="#fdfdd3" stroke="#000" stroke-width="1" />
<path d="M1574,853 l8,8 M1582,853 l-8,8" fill="none" stroke="#000" stroke-width="2.6" shape-rendering="geometricPrecision"/>
<path d="M1584,846 l8,-7 q3,1 2,5 l-7,6 z" fill="#999" stroke="#000" stroke-width="1" shape-rendering="geometricPrecision"/>
<path d="M1590,849 l2,8 h-4 z" fill="#aaa" stroke="#000" stroke-width="1" shape-rendering="geometricPrecision"/>
<text x="1549" y="882.8" font-family='"Liberation Sans", sans-serif' font-size="12" fill="#000" font-weight="normal" text-anchor="start" textLength="72" lengthAdjust="spacingAndGlyphs" >Unregister F...</text>
<rect x="1655.5" y="834.5" width="31" height="31" fill="#fdfdd3" stroke="#000" stroke-width="1" />
<rect x="1658.5" y="838.5" width="17" height="7" fill="#ffffff" stroke="#000" stroke-width="1" />
<rect x="1664" y="839" width="4" height="6" fill="#888" stroke="none" stroke-width="1" />
<circle cx="1679.5" cy="838.5" r="1.9" fill="none" stroke="#000" stroke-width="1" shape-rendering="geometricPrecision"/>
<path d="M1677,836 l1.5,1.5 M1680.5,840.5 v3.5 M1678,844.5 h5" fill="none" stroke="#000" stroke-width="1.1" shape-rendering="geometricPrecision"/>
<path d="M1663,846 v5 M1661,849 l2,3 l2,-3" fill="none" stroke="#000" stroke-width="1" shape-rendering="geometricPrecision"/>
<rect x="1661.5" y="854.5" width="5" height="8" fill="#ffffff" stroke="#000" stroke-width="1" />
<text x="1634" y="882.8" font-family='"Liberation Sans", sans-serif' font-size="12" fill="#000" font-weight="normal" text-anchor="start" textLength="72" lengthAdjust="spacingAndGlyphs" >Flush Event ...</text>
<rect x="1400.5" y="891.5" width="31" height="31" fill="#fdfdd3" stroke="#000" stroke-width="1" />
<circle cx="1422" cy="901" r="6.2" fill="none" stroke="#000" stroke-width="1.1" shape-rendering="geometricPrecision"/>
<circle cx="1421.5" cy="898.5" r="1.9" fill="none" stroke="#000" stroke-width="1" shape-rendering="geometricPrecision"/>
<path d="M1419,896 l1.5,1.5 M1422.5,900.5 v3.5 M1420,904.5 h5" fill="none" stroke="#000" stroke-width="1.1" shape-rendering="geometricPrecision"/>
<path d="M1404,912 h10 M1409,907 v10 M1405.5,908.5 l7,7 M1412.5,908.5 l-7,7" fill="none" stroke="#000" stroke-width="1" shape-rendering="geometricPrecision"/>
<text x="1376" y="940" font-family='"Liberation Sans", sans-serif' font-size="12" fill="#000" font-weight="normal" text-anchor="start" textLength="78" lengthAdjust="spacingAndGlyphs" >Create User E...</text>
<rect x="1485.5" y="891.5" width="31" height="31" fill="#fdfdd3" stroke="#000" stroke-width="1" />
<circle cx="1507" cy="901" r="6.2" fill="none" stroke="#000" stroke-width="1.1" shape-rendering="geometricPrecision"/>
<circle cx="1506.5" cy="898.5" r="1.9" fill="none" stroke="#000" stroke-width="1" shape-rendering="geometricPrecision"/>
<path d="M1504,896 l1.5,1.5 M1507.5,900.5 v3.5 M1505,904.5 h5" fill="none" stroke="#000" stroke-width="1.1" shape-rendering="geometricPrecision"/>
<rect x="1492" y="913" width="3" height="3" fill="#000" stroke="none" stroke-width="1" />
<circle cx="1499" cy="914.5" r="3" fill="none" stroke="#000" stroke-width="1"/>
<path d="M1502.5,914.5 h2.5 M1504.5,911.5 l4,3 l-4,3 z" fill="#000" stroke="#000" stroke-width="1" shape-rendering="geometricPrecision"/>
<text x="1461" y="940" font-family='"Liberation Sans", sans-serif' font-size="12" fill="#000" font-weight="normal" text-anchor="start" textLength="78" lengthAdjust="spacingAndGlyphs" >Generate Use...</text>
<rect x="1570.5" y="891.5" width="31" height="31" fill="#fdfdd3" stroke="#000" stroke-width="1" />
<circle cx="1592" cy="901" r="6.2" fill="none" stroke="#000" stroke-width="1.1" shape-rendering="geometricPrecision"/>
<circle cx="1591.5" cy="898.5" r="1.9" fill="none" stroke="#000" stroke-width="1" shape-rendering="geometricPrecision"/>
<path d="M1589,896 l1.5,1.5 M1592.5,900.5 v3.5 M1590,904.5 h5" fill="none" stroke="#000" stroke-width="1.1" shape-rendering="geometricPrecision"/>
<path d="M1574,910 l8,8 M1582,910 l-8,8" fill="none" stroke="#000" stroke-width="2.6" shape-rendering="geometricPrecision"/>
<text x="1546" y="940" font-family='"Liberation Sans", sans-serif' font-size="12" fill="#000" font-weight="normal" text-anchor="start" textLength="78" lengthAdjust="spacingAndGlyphs" >Destroy User ...</text>
</svg></body></html>
